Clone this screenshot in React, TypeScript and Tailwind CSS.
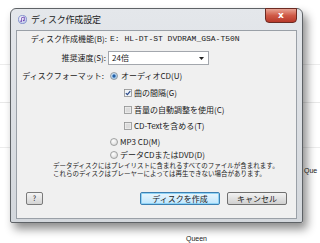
import React from "react";

const JP = "font-['Noto_Sans_CJK_JP','Noto_Sans',sans-serif]";

function Radio({ checked }: { checked?: boolean }) {
  return (
    <svg width="8" height="8" viewBox="0 0 8 8" className="shrink-0">
      <defs>
        <radialGradient id={checked ? "rg1" : "rg0"} cx="0.4" cy="0.35" r="0.7">
          <stop offset="0" stopColor={checked ? "#d8ecff" : "#ffffff"} />
          <stop offset="1" stopColor={checked ? "#9cc3e6" : "#d6d6d6"} />
        </radialGradient>
      </defs>
      <circle cx="4" cy="4" r="3.5" fill={`url(#${checked ? "rg1" : "rg0"})`} stroke="#8e8f8f" strokeWidth="0.8" />
      {checked && <circle cx="4" cy="4" r="1.7" fill="#1f5fa8" />}
    </svg>
  );
}

function Check({ checked }: { checked?: boolean }) {
  return (
    <svg width="8" height="8" viewBox="0 0 8 8" className="shrink-0">
      <rect x="0.5" y="0.5" width="7" height="7" fill="#f4f4f4" stroke="#8e8f8f" strokeWidth="0.8" />
      <rect x="1.5" y="1.5" width="5" height="5" fill={checked ? "#eef3f8" : "#dcdcdc"} />
      {checked && <path d="M1.8 4.1 L3.4 5.7 L6.3 2.1" fill="none" stroke="#2b4a8a" strokeWidth="1.2" />}
    </svg>
  );
}

export default function App() {
  return (
    <div className={`relative w-[320px] h-[243px] overflow-hidden bg-white ${JP} text-[#1a1a1a]`}>
      {/* background list */}
      <div className="flex flex-col w-full h-full">
        <div className="h-[65px] border-b border-[#ececec]" />
        <div className="h-[38px] border-b border-[#e8e8e8]" />
        <div className="h-[45px] border-b border-[#ececec]" />
        <div className="h-[16px]" />
        <div className="flex h-[12px] items-center text-[7px] leading-none font-['Liberation_Sans',sans-serif] pl-[304px]">
          <span>Que</span>
        </div>
        <div className="flex-1" />
        <div className="h-[8px] text-[7px] leading-none font-['Liberation_Sans',sans-serif] pl-[186px]">Queen</div>
      </div>

      {/* dialog window */}
      <div className="absolute left-[10px] top-[8px] w-[293px] h-[215px] rounded-t-[6px] rounded-b-[2px] border border-[#5e6266] bg-gradient-to-b from-[#e4e7eb] to-[#d3d7dc] shadow-[4px_6px_10px_rgba(0,0,0,0.45)] flex flex-col">
        {/* title bar */}
        <div className="relative h-[21px] flex items-center pl-[7px] shrink-0">
          <svg width="9" height="9" viewBox="0 0 10 10" className="shrink-0">
            <defs>
              <radialGradient id="it" cx="0.4" cy="0.35" r="0.7">
                <stop offset="0" stopColor="#ffffff" />
                <stop offset="1" stopColor="#b9c4e8" />
              </radialGradient>
            </defs>
            <circle cx="5" cy="5" r="4.5" fill="url(#it)" stroke="#6b7cc4" strokeWidth="0.8" />
            <path d="M4 7 V3 L7 2.3 V6" fill="none" stroke="#6a3fb0" strokeWidth="0.9" />
            <circle cx="3.4" cy="7" r="0.9" fill="#6a3fb0" />
            <circle cx="6.4" cy="6.1" r="0.9" fill="#6a3fb0" />
          </svg>
          <span className="ml-[4px] text-[9px] leading-none text-[#1c1c1c] tracking-[-0.2px]">ディスク作成設定</span>
          <div className="absolute right-[5px] top-[-1px] w-[32px] h-[15px] rounded-b-[4px] border border-[#6b2a22] bg-gradient-to-b from-[#e7a394] via-[#cf5a47] to-[#b8382a] flex items-center justify-center">
            <span className="text-white text-[9px] leading-none font-bold font-['DejaVu_Sans',sans-serif]">x</span>
          </div>
        </div>
        {/* content */}
        <div className="mx-[5px] h-[189px] bg-[#f0f0f0] border border-[#9aa0a7] flex flex-col text-[8px] leading-none">
          <div className="flex items-center h-[13px] mt-[1px]">
            <div className="w-[90px] text-right whitespace-nowrap">ディスク作成機能(B):</div>
            <div className="ml-[3px] whitespace-nowrap font-['Liberation_Mono',monospace] text-[8px]">E: HL-DT-ST DVDRAM_GSA-T50N</div>
          </div>
          <div className="flex items-center h-[14px] mt-[6px]">
            <div className="w-[89px] text-right whitespace-nowrap">推奨速度(S):</div>
            <div className="ml-[2px] w-[101px] h-[14px] bg-white border border-[#a3a7ad] flex items-center justify-between pl-[3px] pr-[4px]">
              <span>24倍</span>
              <svg width="5" height="3" viewBox="0 0 5 3"><path d="M0 0 H5 L2.5 3 Z" fill="#222" /></svg>
            </div>
          </div>
          <div className="flex items-center h-[12px] mt-[5px]">
            <div className="w-[87px] text-right whitespace-nowrap">ディスクフォーマット:</div>
            <div className="ml-[6px] flex items-center">
              <Radio checked />
              <span className="ml-[3px] whitespace-nowrap">オーディオCD(U)</span>
            </div>
          </div>
          <div className="flex items-center h-[12px] mt-[5px] pl-[107px]">
            <Check checked />
            <span className="ml-[2px] whitespace-nowrap">曲の間隔(G)</span>
          </div>
          <div className="flex items-center h-[12px] mt-[5px] pl-[107px]">
            <Check />
            <span className="ml-[2px] whitespace-nowrap">音量の自動調整を使用(C)</span>
          </div>
          <div className="flex items-center h-[12px] mt-[4px] pl-[107px]">
            <Check />
            <span className="ml-[2px] whitespace-nowrap">CD-Textを含める(T)</span>
          </div>
          <div className="flex items-center h-[12px] mt-[4px] pl-[93px]">
            <Radio />
            <span className="ml-[2px] whitespace-nowrap">MP3 CD(M)</span>
          </div>
          <div className="flex items-center h-[10px] mt-[2px] pl-[93px]">
            <Radio />
            <span className="ml-[2px] whitespace-nowrap">データCDまたはDVD(D)</span>
          </div>
          <div className="mt-[1px] pl-[36px] text-[6.5px] leading-[8px] whitespace-nowrap">
            <div>データディスクにはプレイリストに含まれるすべてのファイルが含まれます。</div>
            <div>これらのディスクはプレーヤーによっては再生できない場合があります。</div>
          </div>
          <div className="flex items-center mt-[15px] h-[13px] px-[9px]">
            <div className="w-[17px] h-[13px] rounded-[2px] border border-[#7a7a7a] bg-gradient-to-b from-[#f4f4f4] to-[#d4d4d4] flex items-center justify-center text-[7px]">?</div>
            <div className="flex-1" />
            <div className="w-[80px] h-[13px] rounded-[2px] border border-[#3c7fb1] bg-gradient-to-b from-[#eaf6fd] to-[#bee6fd] shadow-[inset_0_0_0_1px_#8fd3f6] flex items-center justify-center whitespace-nowrap">ディスクを作成</div>
            <div className="ml-[7px] w-[60px] h-[13px] rounded-[2px] border border-[#707070] bg-gradient-to-b from-[#f2f2f2] to-[#d0d0d0] flex items-center justify-center whitespace-nowrap">キャンセル</div>
          </div>
        </div>
      </div>
    </div>
  );
}
